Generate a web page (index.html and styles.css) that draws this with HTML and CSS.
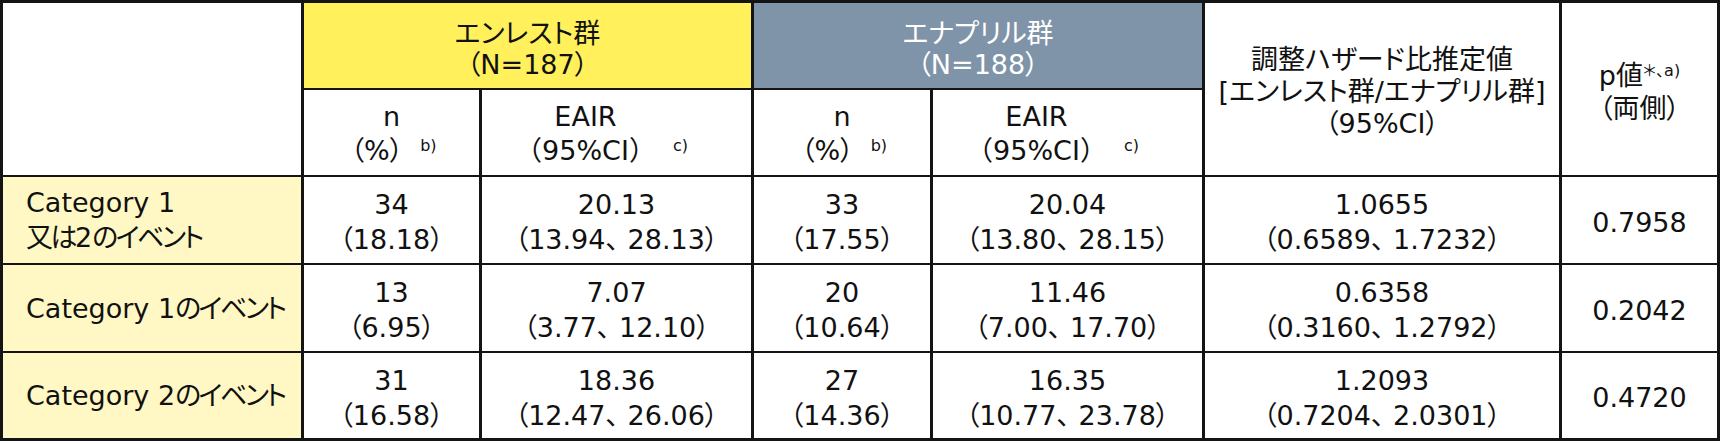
FILE: index.html
```html
<!DOCTYPE html>
<html lang="ja">
<head>
<meta charset="utf-8">
<title>イベント発現率</title>
<link rel="stylesheet" href="styles.css">
</head>
<body>
<div class="grid">
  <div class="cell blank span2"></div>
  <div class="cell grp yellow">
    <div>エンレスト群</div>
    <div>（N=187）</div>
  </div>
  <div class="cell grp grey">
    <div>エナプリル群</div>
    <div>（N=188）</div>
  </div>
  <div class="cell span2 hr">
    <div>調整ハザード比推定値</div>
    <div>[エンレスト群/エナプリル群]</div>
    <div>（95%CI）</div>
  </div>
  <div class="cell span2 pv">
    <div>p値<span class="sup">＊、a)</span></div>
    <div>（両側）</div>
  </div>

  <div class="cell sub"><div>n</div><div class="ln-n">（%）<span class="sup sb">b)</span></div></div>
  <div class="cell sub eair"><div>EAIR</div><div class="ln-e">（95%CI）<span class="sup sc">c)</span></div></div>
  <div class="cell sub"><div>n</div><div class="ln-n">（%）<span class="sup sb">b)</span></div></div>
  <div class="cell sub eair"><div>EAIR</div><div class="ln-e">（95%CI）<span class="sup sc">c)</span></div></div>

  <div class="cell label"><div>Category 1</div><div><span class="jp">又は</span>2<span class="jp">のイベント</span></div></div>
  <div class="cell data"><div>34</div><div>（18.18）</div></div>
  <div class="cell data"><div>20.13</div><div>（13.94、 28.13）</div></div>
  <div class="cell data"><div>33</div><div>（17.55）</div></div>
  <div class="cell data"><div>20.04</div><div>（13.80、 28.15）</div></div>
  <div class="cell data"><div>1.0655</div><div>（0.6589、 1.7232）</div></div>
  <div class="cell data"><div>0.7958</div></div>

  <div class="cell label"><div>Category 1<span class="jp">のイベント</span></div></div>
  <div class="cell data"><div>13</div><div>（6.95）</div></div>
  <div class="cell data"><div>7.07</div><div>（3.77、 12.10）</div></div>
  <div class="cell data"><div>20</div><div>（10.64）</div></div>
  <div class="cell data"><div>11.46</div><div>（7.00、 17.70）</div></div>
  <div class="cell data"><div>0.6358</div><div>（0.3160、 1.2792）</div></div>
  <div class="cell data"><div>0.2042</div></div>

  <div class="cell label"><div>Category 2<span class="jp">のイベント</span></div></div>
  <div class="cell data"><div>31</div><div>（16.58）</div></div>
  <div class="cell data"><div>18.36</div><div>（12.47、 26.06）</div></div>
  <div class="cell data"><div>27</div><div>（14.36）</div></div>
  <div class="cell data"><div>16.35</div><div>（10.77、 23.78）</div></div>
  <div class="cell data"><div>1.2093</div><div>（0.7204、 2.0301）</div></div>
  <div class="cell data"><div>0.4720</div></div>
</div>
</body>
</html>
```

FILE: styles.css
```css
html, body {
  margin: 0;
  padding: 0;
  background: #ffffff;
}

body {
  font-family: "DejaVu Sans", "Noto Sans CJK JP", sans-serif;
  font-size: 27px;
  font-feature-settings: "palt";
  color: #111111;
}

.grid {
  display: grid;
  grid-template-columns: 298px 175px 269px 176px 269px 354px 155px;
  grid-template-rows: 85px 85px 86px 86px 85px;
  column-gap: 3px;
  row-gap: 2px;
  padding: 3px;
  width: 1714px;
  background: #141414;
}

.cell {
  background: #ffffff;
  display: flex;
  flex-direction: column;
  justify-content: center;
  align-items: center;
  text-align: center;
  white-space: nowrap;
}

.span2 {
  grid-row: span 2;
}

.grp {
  grid-column: span 2;
  line-height: 31px;
  padding-top: 6px;
}

.yellow {
  background: #fff05c;
}

.grey {
  background: #7f94a9;
  color: #ffffff;
}

.hr {
  line-height: 32px;
  padding-top: 5px;
}

.pv {
  line-height: 33px;
}

.sub {
  line-height: 29px;
  padding-top: 2px;
}

.sub.eair {
  padding-right: 62px;
}

.ln-n {
  padding-right: 28px;
}

.ln-e {
  font-feature-settings: normal;
}

.sup {
  font-size: 16px;
  vertical-align: 9px;
}

.sb {
  margin-left: 17px;
  margin-right: -32px;
}

.sc {
  margin-left: 17px;
  margin-right: -32px;
}

.label {
  background: #fff8c4;
  align-items: flex-start;
  text-align: left;
  padding-left: 23px;
  line-height: 35px;
}

.jp {
  letter-spacing: -2.5px;
}

.data {
  line-height: 35px;
  padding-top: 4px;
}
```
